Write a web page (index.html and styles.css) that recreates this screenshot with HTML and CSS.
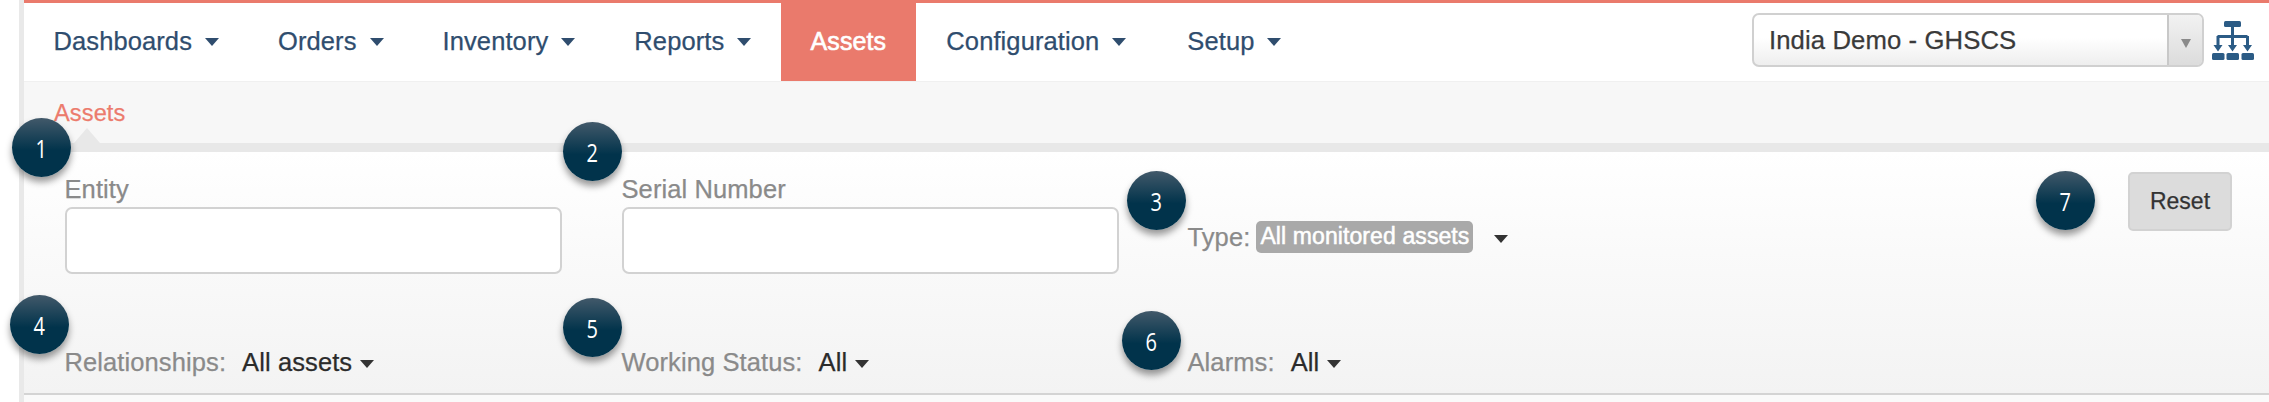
FILE: index.html
```html
<!DOCTYPE html>
<html lang="en">
<head>
<meta charset="utf-8">
<title>Assets</title>
<link rel="stylesheet" href="styles.css">
</head>
<body>
<div class="page">
  <header class="topbar">
    <nav class="nav">
      <a class="nav-item">Dashboards<i class="caret"></i></a>
      <a class="nav-item">Orders<i class="caret"></i></a>
      <a class="nav-item">Inventory<i class="caret"></i></a>
      <a class="nav-item">Reports<i class="caret"></i></a>
      <a class="nav-item active">Assets</a>
      <a class="nav-item">Configuration<i class="caret"></i></a>
      <a class="nav-item">Setup<i class="caret"></i></a>
    </nav>
    <div class="tools">
      <div class="domain">
        <span class="domain-text">India Demo - GHSCS</span>
        <span class="domain-arrow"><i class="domain-tri"></i></span>
      </div>
      <svg class="tree" viewBox="0 0 42 39" width="42" height="39" aria-hidden="true">
        <rect x="12" y="0" width="17" height="6" rx="1.5" fill="#2b5b85"/>
        <path d="M20.5 6V15M5.500 15.500H35.500M6 15V27M20.500 15V27M35.500 15V27" stroke="#2b5b85" stroke-width="3" fill="none"/>
        <path d="M1.500 24H10.500L6 30.500ZM16 24H25L20.500 30.500ZM31 24H40L35.500 30.500Z" fill="#2b5b85"/>
        <rect x="0" y="32" width="12.500" height="7" rx="1.500" fill="#2b5b85"/>
        <rect x="14.500" y="32" width="12.500" height="7" rx="1.500" fill="#2b5b85"/>
        <rect x="29.500" y="32" width="12.500" height="7" rx="1.500" fill="#2b5b85"/>
      </svg>
    </div>
  </header>

  <div class="crumbs"><span class="crumb">Assets</span></div>
  <div class="tab-rule"><i class="tab-notch"></i></div>

  <section class="filters">
    <div class="field">
      <label class="field-label">Entity</label>
      <input class="field-input" type="text">
    </div>
    <div class="field">
      <label class="field-label">Serial Number</label>
      <input class="field-input" type="text">
    </div>
    <div class="type-filter">
      <span class="muted">Type:</span>
      <span class="badge">All monitored assets</span>
      <i class="caret dark type-caret"></i>
    </div>
    <button class="reset" type="button">Reset</button>

    <div class="option"><span class="muted">Relationships:</span><span class="value">All assets</span><i class="caret dark"></i></div>
    <div class="option"><span class="muted">Working Status:</span><span class="value">All</span><i class="caret dark"></i></div>
    <div class="option"><span class="muted">Alarms:</span><span class="value">All</span><i class="caret dark"></i></div>
  </section>

  <div class="foot"></div>
</div>

<span class="marker m1"><span class="digit">1</span></span>
<span class="marker m2"><span class="digit">2</span></span>
<span class="marker m3"><span class="digit">3</span></span>
<span class="marker m4"><span class="digit">4</span></span>
<span class="marker m5"><span class="digit">5</span></span>
<span class="marker m6"><span class="digit">6</span></span>
<span class="marker m7"><span class="digit">7</span></span>
</body>
</html>
```

FILE: styles.css
```css
* { box-sizing: border-box; }

html, body {
  margin: 0;
  height: 402px;
  overflow: hidden;
  background: #fff;
}

body {
  position: relative;
  font-family: "Liberation Sans", Arial, sans-serif;
  font-size: 25.500px;
  letter-spacing: 0.1px;
  -webkit-text-stroke: 0.25px;
}

.page {
  margin-left: 19px;
  border-left: 5px solid #e9e9e9;
  height: 402px;
}

/* top navigation */
.topbar {
  display: flex;
  justify-content: space-between;
  height: 81px;
  border-top: 3px solid #ea7a6c;
  background: #fff;
}

.nav { display: flex; }

.nav-item {
  display: flex;
  align-items: center;
  padding: 0 29.500px 3px;
  color: #2f4d6e;
  line-height: 30px;
}

.nav-item.active {
  width: 135px;
  padding: 0 0 3px;
  justify-content: center;
  background: #ea7a6c;
  color: #fff;
  font-size: 25px;
  -webkit-text-stroke: 0.6px #fff;
}

.nav-item.active ~ .nav-item { padding: 0 30.500px 3px; }

.caret {
  display: inline-block;
  width: 0;
  height: 0;
  margin-left: 13px;
  margin-top: 3px;
  border-top: 8px solid #2f4d6e;
  border-left: 7.500px solid transparent;
  border-right: 7.500px solid transparent;
}

.caret.dark { border-top-color: #333; }

.tools {
  display: flex;
  align-items: flex-start;
  gap: 8px;
  padding: 10px 15px 0 0;
}

.domain {
  display: flex;
  width: 452px;
  height: 54px;
  border: 2px solid #d0d0d0;
  border-radius: 7px;
  background: linear-gradient(#fff 45%, #eeeeee);
  color: #3a3a3a;
  font-size: 25.700px;
}

.domain-text {
  flex: 1;
  padding: 9px 0 0 15px;
  line-height: 32px;
}

.domain-arrow {
  display: flex;
  width: 35px;
  align-items: center;
  justify-content: center;
  border-left: 2px solid #c8c8c8;
  border-radius: 0 5px 5px 0;
  background: linear-gradient(#f2f2f2, #dcdcdc);
}

.domain-tri {
  width: 0;
  height: 0;
  margin-top: 6px;
  border-top: 9px solid #8a8a8a;
  border-left: 5.500px solid transparent;
  border-right: 5.500px solid transparent;
}

.tree { margin-top: 8px; }

/* breadcrumb */
.crumbs {
  height: 62px;
  padding: 17px 0 0 30px;
  background: #f7f7f7;
  border-top: 1px solid #f0f0f0;
}

.crumb {
  color: #ec7b6d;
  font-size: 23.600px;
  line-height: 28px;
  display: block;
}

.tab-rule {
  position: relative;
  height: 9px;
  background: #e8e8e8;
}

.tab-notch {
  position: absolute;
  left: 50px;
  bottom: 9px;
  width: 0;
  height: 0;
  border-bottom: 15px solid #e8e8e8;
  border-left: 13px solid transparent;
  border-right: 13px solid transparent;
}

/* filters */
.filters {
  display: grid;
  grid-template-columns: 557px 566px 1fr auto;
  grid-template-rows: 102px auto;
  row-gap: 73px;
  height: 243px;
  padding: 20px 37px 0 40.500px;
  border-bottom: 2px solid #d4d4d4;
  background: linear-gradient(#ffffff, #f3f3f3);
}

.field { display: flex; flex-direction: column; }

.field-label {
  height: 35px;
  color: #8a8a8a;
  line-height: 35px;
}

.field-input {
  width: 497px;
  height: 67px;
  border: 2px solid #d2d2d2;
  border-radius: 7px;
  background: #fff;
}

.muted { color: #8a8a8a; }

.type-filter {
  display: flex;
  align-items: center;
  align-self: start;
  height: 32px;
  margin-top: 49px;
  line-height: 32px;
}

.badge {
  margin-left: 6px;
  padding: 0 4px;
  height: 32px;
  border-radius: 5px;
  background: #a9a9a9;
  color: #fff;
  font-size: 23px;
  line-height: 31px;
  -webkit-text-stroke: 0.5px #fff;
}

.type-caret { margin-left: 21px; margin-top: 4px; }

.reset {
  width: 104px;
  height: 59px;
  border: 2px solid #d2d2d2;
  border-radius: 5px;
  background: #dcdcdc;
  color: #333;
  font-family: inherit;
  font-size: 23px;
}

.option {
  display: flex;
  align-items: center;
  height: 30px;
}

.value {
  margin-left: 16px;
  color: #2b2b2b;
}

.option .caret { margin-left: 8px; margin-top: 3px; }

.foot { height: 7px; background: #fafafa; }

/* numbered callouts laid over the screen */
.marker {
  position: absolute;
  display: flex;
  align-items: center;
  justify-content: center;
  width: 59px;
  height: 59px;
  border-radius: 50%;
  background: linear-gradient(#42596a, #01334b 55%);
  box-shadow: 0 5px 7px rgba(0, 0, 0, 0.4);
  color: #fff;
  font-family: "Open Sans", sans-serif;
  font-size: 25px;
  letter-spacing: 0;
  -webkit-text-stroke: 0;
}

.digit {
  display: block;
  transform: scaleX(0.8);
}

.m1 { left: 12px; top: 118px; }
.m2 { left: 563px; top: 122px; }
.m3 { left: 1127px; top: 171px; }
.m4 { left: 10px; top: 295px; }
.m5 { left: 563px; top: 298px; }
.m6 { left: 1122px; top: 311px; }
.m7 { left: 2036px; top: 171px; }
```
